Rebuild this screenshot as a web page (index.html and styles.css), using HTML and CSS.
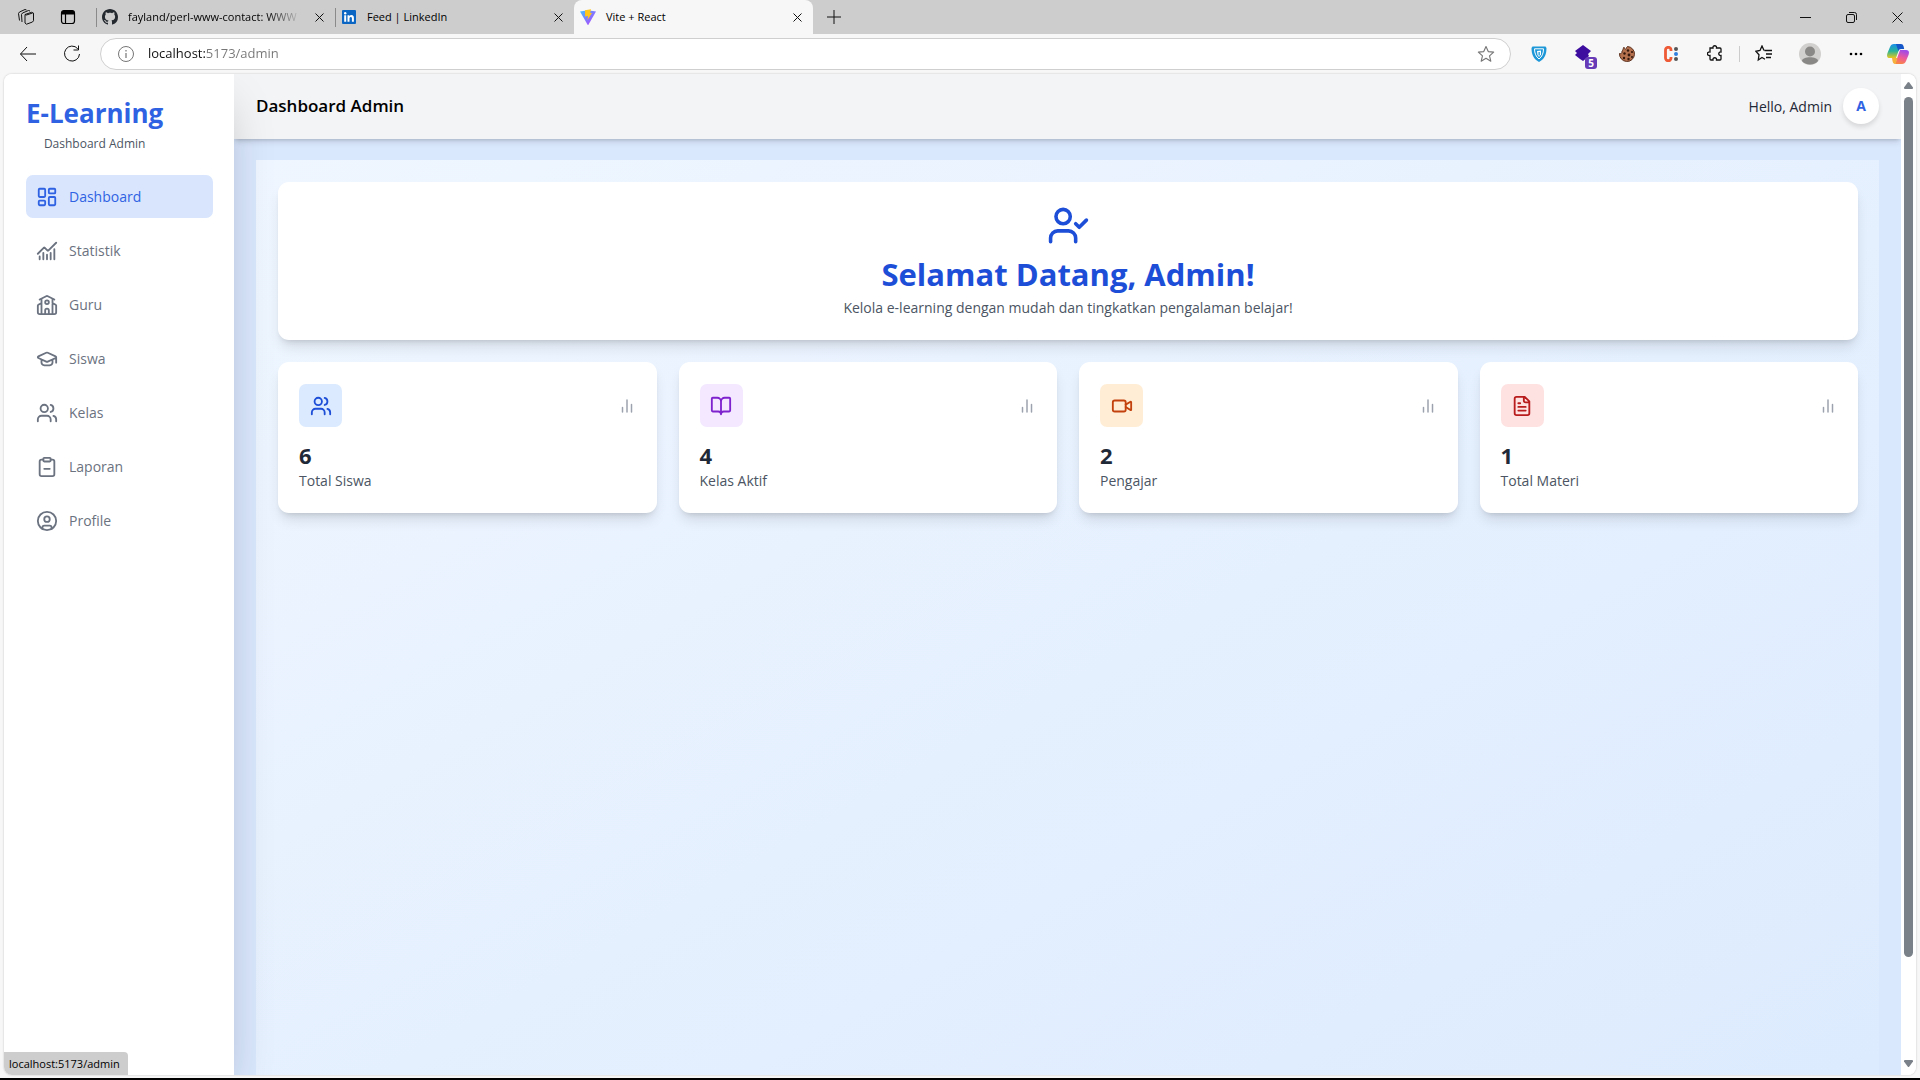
FILE: index.html
```html
<!DOCTYPE html>
<html lang="id">
<head>
<meta charset="utf-8">
<title>Vite + React</title>
<link rel="stylesheet" href="styles.css">
</head>
<body>
<div class="window">
  <div class="tabstrip">
    <div class="strip-tools">
      <button class="tool" aria-label="Workspaces"><svg width="18" height="18" viewBox="0 0 18 18" class="thin"><path d="M8 6.5l6.5-2.2 2 .8v7.6l-1 1.3-6 2.2L8 15zM5 14l-.5-7.500 1-1.500 6-2.500 1.500.5M2.500 12.500L1.500 5.500l1-1.500 5.500-2.500 1.500.5M8 6.500l1.500.5 6-2"/></svg></button>
      <button class="tool" aria-label="Tab actions"><svg width="16" height="16" viewBox="0 0 16 16"><rect x="1.500" y="1.500" width="13" height="13" rx="2.500" fill="none" stroke="#000" stroke-width="1.200"/><path d="M1.500 5.500V4a2.500 2.500 0 0 1 2.500-2.500h8A2.500 2.500 0 0 1 14.500 4v1.500z"/><path d="M5.500 5v9.500" stroke="#000" stroke-width="1.200"/></svg></button>
    </div>
    <div class="tab">
      <svg class="favicon" viewBox="0 0 16 16"><path fill="#24292f" d="M8 0C3.580 0 0 3.580 0 8c0 3.540 2.290 6.530 5.470 7.590.4.070.55-.17.55-.38 0-.19-.01-.82-.01-1.490-2.010.37-2.530-.49-2.690-.94-.09-.23-.48-.94-.82-1.130-.28-.15-.68-.52-.01-.53.63-.01 1.080.58 1.230.82.72 1.210 1.870.87 2.330.66.07-.52.28-.87.51-1.070-1.780-.2-3.640-.89-3.640-3.950 0-.87.31-1.590.82-2.150-.08-.2-.36-1.020.08-2.120 0 0 .67-.21 2.200.82.64-.18 1.320-.27 2-.27s1.360.09 2 .27c1.530-1.040 2.200-.82 2.200-.82.44 1.100.16 1.920.08 2.120.51.56.82 1.270.82 2.150 0 3.070-1.870 3.750-3.650 3.950.29.25.54.73.54 1.480 0 1.070-.01 1.930-.01 2.200 0 .21.15.46.55.38A8.010 8.010 0 0 0 16 8c0-4.420-3.580-8-8-8z"/></svg>
      <span class="tab-title tab-title-long">fayland/perl-www-contact: WWW</span>
      <button class="close" aria-label="Close tab"><svg width="9" height="9" viewBox="0 0 9 9" class="thin"><path d="M.5.500l8 8M8.500.500l-8 8"/></svg></button>
    </div>
    <div class="tab">
      <svg class="favicon" viewBox="0 0 16 16"><rect x="1" y="1" width="14" height="14" rx="1" fill="#0a66c2"/><path fill="#fff" d="M3.200 6.300h2v6.500h-2zM6.500 6.300h1.900v.9c.4-.7 1.100-1.100 2-1.100 2 0 2.500 1.300 2.500 3.100v3.600h-2V9.600c0-.9-.1-1.700-1.100-1.700s-1.300.8-1.300 1.700v3.200h-2z"/><circle cx="4.200" cy="4.200" r="1.200" fill="#fff"/></svg>
      <span class="tab-title">Feed | LinkedIn</span>
      <button class="close" aria-label="Close tab"><svg width="9" height="9" viewBox="0 0 9 9" class="thin"><path d="M.5.500l8 8M8.500.500l-8 8"/></svg></button>
    </div>
    <div class="tab tab-active">
      <svg class="favicon" viewBox="0 0 16 16"><defs><linearGradient id="vite" x1="0" y1="0" x2="1" y2="1"><stop offset="0" stop-color="#41c3ff"/><stop offset="1" stop-color="#bd34fe"/></linearGradient></defs><path fill="url(#vite)" d="M0 2.500L8 1.300l8 1.200-7.600 13.300q-.4.500-.8 0z"/><path fill="#ffc61c" d="M5 1.200l6-1-.8 3.800h1.800L7.500 11l.5-4-2.900.5z"/></svg>
      <span class="tab-title">Vite + React</span>
      <button class="close" aria-label="Close tab"><svg width="9" height="9" viewBox="0 0 9 9" class="thin"><path d="M.5.500l8 8M8.500.500l-8 8"/></svg></button>
    </div>
    <button class="new-tab" aria-label="New tab"><svg width="14" height="14" viewBox="0 0 14 14" class="thin"><path d="M7 0v14M0 7h14"/></svg></button>
    <div class="controls">
      <button class="control" aria-label="Minimize"><svg width="11" height="11" viewBox="0 0 11 11" class="thin"><path d="M0 5.500h11"/></svg></button>
      <button class="control" aria-label="Restore"><svg width="11" height="11" viewBox="0 0 11 11" class="thin"><rect x=".5" y="2.500" width="8" height="8" rx="1.500"/><path d="M3 .5h5.500a2 2 0 0 1 2 2V8"/></svg></button>
      <button class="control" aria-label="Close"><svg width="11" height="11" viewBox="0 0 11 11" class="thin"><path d="M.5.500l10 10M10.500.500l-10 10"/></svg></button>
    </div>
  </div>

  <div class="toolbar">
    <button class="nav-btn" aria-label="Back"><svg width="18" height="16" viewBox="0 0 18 16" class="thin"><path d="M17 8H1.500M8 1L1.500 8 8 15"/></svg></button>
    <button class="nav-btn" aria-label="Refresh"><svg width="18" height="18" viewBox="0 0 18 18" class="thin"><path d="M14.800 3.800A7.500 7.500 0 1 0 16.500 9M15.500.500v4.500h-5"/></svg></button>
    <div class="address">
      <svg width="18" height="18" viewBox="0 0 18 18" fill="none" stroke="#767676"><circle cx="9" cy="9" r="7.500"/><path d="M9 8v5M9 5v1.500" stroke-width="1.200"/></svg>
      <input class="url" type="text" aria-label="Address" value="localhost:5173/admin">
      <svg width="18" height="18" viewBox="0 0 24 24" fill="none" stroke="#767676" stroke-width="1.500" stroke-linejoin="round"><path d="M12 2l3 6.800 7.200.7-5.500 4.900 1.700 7.200L12 17.800l-6.400 3.800 1.700-7.200L1.800 9.500 9 8.800z"/></svg>
    </div>
    <div class="extensions">
      <button class="ext" aria-label="Shield"><svg width="16" height="16" viewBox="0 0 16 16"><path fill="#1d97d8" d="M1.500.500h13l1 1.500c0 6.500-2 11-7.500 14C2.500 13 .5 8.500.5 2z"/><path fill="none" stroke="#fff" d="M3.500 2.800h9c0 4.500-1.500 8-4.500 10.200C5 10.800 3.500 7.300 3.500 2.800z"/><path fill="#fff" d="M6 5l4-.5v4L8 11 6.500 9z"/><path fill="#1d97d8" d="M7.500 6h1.300v3.500H7.500z"/></svg></button>
      <button class="ext" aria-label="Layers"><svg width="20" height="20" viewBox="0 0 20 20"><path fill="#3c0d9e" d="M10 1l8 6-3 3 1 2-6 5-3-2-5-4 2-2-2-2z"/></svg><span class="badge">5</span></button>
      <button class="ext" aria-label="Cookies"><svg width="16" height="16" viewBox="0 0 16 16"><path fill="#b5704e" stroke="#5a2e1b" d="M5 1.200c0 1.500 1 2 2 2 .5-1 .5-2 1.500-2.700a7.500 7.500 0 1 1-8 7c1.500.5 3-.5 2.500-2.500C4 4.500 4 2.500 5 1.200z"/><g fill="#35180d"><circle cx="9" cy="4.500" r="1.200"/><circle cx="5.500" cy="7.500" r="1.200"/><circle cx="10" cy="9" r="1.400"/><circle cx="13" cy="6" r="1.100"/><circle cx="5" cy="12" r="1.200"/><circle cx="9.500" cy="13" r="1.200"/><circle cx="13" cy="11" r="1"/></g></svg></button>
      <button class="ext" aria-label="Coupon"><svg width="16" height="16" viewBox="0 0 16 16" fill="none"><path stroke="#ee5a35" stroke-width="2.800" d="M8 5V4a2.500 2.500 0 0 0-5.500 0v8A2.500 2.500 0 0 0 8 12v-1"/><g><circle cx="13" cy="3" r="2" fill="#555"/><circle cx="13" cy="8" r="2" fill="#2f7fe0"/><circle cx="13" cy="13" r="2" fill="#555"/></g></svg></button>
      <button class="ext" aria-label="Extensions"><svg width="16" height="17" viewBox="0 0 16 17" class="thin"><path d="M3 3h3c-.5-3 4-3 3.500 0H13q1 0 1 1v3c-3-.5-3 4 0 3.500V14q0 1-1 1H9.500c.5-3-4-3-3.500 0H4q-1 0-1-1v-3.500c-3.500.5-3.500-4 0-3.500z" stroke-width="1.300"/></svg></button>
      <span class="divider"></span>
      <button class="ext ext-wide" aria-label="Favorites"><svg width="18" height="17" viewBox="0 0 18 17" class="thin"><path stroke-width="1.300" d="M9 5.500L7 1 5 5.500l-4 .8 3 3.500-.7 5.200L7 12.500l3 1.800M9.500 5.500H17M11 9h6M11 12.500h5"/></svg></button>
      <button class="ext ext-wide" aria-label="Account"><svg width="22" height="22" viewBox="0 0 22 22"><circle cx="11" cy="11" r="11" fill="#d2d0ce"/><circle cx="11" cy="8.500" r="5" fill="#8a8886"/><path fill="#8a8886" d="M3 18c0-5 16-5 16 0-3 4.500-13 4.500-16 0z"/></svg></button>
      <button class="ext ext-wide" aria-label="Settings"><svg width="14" height="4" viewBox="0 0 14 4"><circle cx="2" cy="2" r="1.300"/><circle cx="7" cy="2" r="1.300"/><circle cx="12" cy="2" r="1.300"/></svg></button>
      <button class="ext ext-last" aria-label="Copilot"><svg width="22" height="20" viewBox="0 0 22 20"><defs><linearGradient id="cpa" x1="0" y1="0" x2="0" y2="1"><stop offset="0" stop-color="#1a8fe8"/><stop offset=".5" stop-color="#26b39b"/><stop offset="1" stop-color="#e8c81c"/></linearGradient><linearGradient id="cpb" x1="0.500" y1="0" x2="0.200" y2="1"><stop offset="0" stop-color="#a14be8"/><stop offset=".5" stop-color="#ee5a9b"/><stop offset="1" stop-color="#fb8a3c"/></linearGradient></defs><path fill="url(#cpa)" d="M7 0h7L9 14H3c-3 0-3.500-2-2.500-5L3 3c.7-2 2-3 4-3z"/><path fill="#1556c8" d="M9 0h5q2 0 2.500 2l.7 3H14q-2 0-2.700 2z"/><path fill="url(#cpb)" d="M15 20H8l5-14h6c3 0 3.500 2 2.500 5L19 17c-.7 2-2 3-4 3z"/><path fill="#f6b13c" d="M5 14h5.500L9 18.500Q8.500 20 7.500 20 6 20 5.500 17z"/></svg></button>
    </div>
  </div>

  <div class="viewport">
    <aside class="sidebar">
      <div class="brand">
        <h1 class="brand-name">E-Learning</h1>
        <p class="brand-sub">Dashboard Admin</p>
      </div>
      <nav class="menu">
        <a class="link link-active" href="#dashboard"><svg class="icon" viewBox="0 0 24 24"><rect x="3" y="3" width="7" height="9" rx="1"/><rect x="14" y="3" width="7" height="5" rx="1"/><rect x="14" y="12" width="7" height="9" rx="1"/><rect x="3" y="16" width="7" height="5" rx="1"/></svg>Dashboard</a>
        <a class="link" href="#statistik"><svg class="icon" viewBox="0 0 24 24"><path d="M12 16v5M16 14v7M20 10v11M22 3l-8.646 8.646a.5.5 0 0 1-.708 0L9.354 8.354a.5.5 0 0 0-.707 0L2 15M4 18v3M8 14v7"/></svg>Statistik</a>
        <a class="link" href="#guru"><svg class="icon" viewBox="0 0 24 24"><path d="M14 22v-4a2 2 0 1 0-4 0v4M18 10l3.447 1.724a1 1 0 0 1 .553.894V20a2 2 0 0 1-2 2H4a2 2 0 0 1-2-2v-7.382a1 1 0 0 1 .553-.894L6 10M18 5v17M4 6l7.106-3.553a2 2 0 0 1 1.788 0L20 6M6 5v17"/><circle cx="12" cy="9" r="2"/></svg>Guru</a>
        <a class="link" href="#siswa"><svg class="icon" viewBox="0 0 24 24"><path d="M21.420 10.922a1 1 0 0 0-.019-1.838L12.830 5.180a2 2 0 0 0-1.660 0L2.600 9.080a1 1 0 0 0 0 1.832l8.570 3.908a2 2 0 0 0 1.660 0zM22 10v6M6 12.500V16a6 3 0 0 0 12 0v-3.500"/></svg>Siswa</a>
        <a class="link" href="#kelas"><svg class="icon" viewBox="0 0 24 24"><path d="M16 21v-2a4 4 0 0 0-4-4H6a4 4 0 0 0-4 4v2M22 21v-2a4 4 0 0 0-3-3.870M16 3.130a4 4 0 0 1 0 7.750"/><circle cx="9" cy="7" r="4"/></svg>Kelas</a>
        <a class="link" href="#laporan"><svg class="icon" viewBox="0 0 24 24"><rect x="8" y="2" width="8" height="4" rx="1"/><path d="M16 4h2a2 2 0 0 1 2 2v14a2 2 0 0 1-2 2H6a2 2 0 0 1-2-2V6a2 2 0 0 1 2-2h2M9 14h6"/></svg>Laporan</a>
        <a class="link" href="#profile"><svg class="icon" viewBox="0 0 24 24"><circle cx="12" cy="12" r="10"/><circle cx="12" cy="10" r="3"/><path d="M7 20.662V19a2 2 0 0 1 2-2h6a2 2 0 0 1 2 2v1.662"/></svg>Profile</a>
      </nav>
    </aside>

    <div class="page">
      <header class="topbar">
        <h2 class="topbar-title">Dashboard Admin</h2>
        <div class="user"><span>Hello, Admin</span><span class="avatar">A</span></div>
      </header>
      <main class="main">
        <div class="panel">
          <section class="welcome">
            <svg class="icon icon-hero" viewBox="0 0 24 24"><path d="M16 11l2 2 4-4M16 21v-2a4 4 0 0 0-4-4H6a4 4 0 0 0-4 4v2"/><circle cx="9" cy="7" r="4"/></svg>
            <h2 class="welcome-title">Selamat Datang, Admin!</h2>
            <p class="welcome-text">Kelola e-learning dengan mudah dan tingkatkan pengalaman belajar!</p>
          </section>
          <section class="stats">
            <article class="card">
              <div class="card-head"><span class="chip chip-blue"><svg class="icon" viewBox="0 0 24 24"><path d="M16 21v-2a4 4 0 0 0-4-4H6a4 4 0 0 0-4 4v2M22 21v-2a4 4 0 0 0-3-3.870M16 3.130a4 4 0 0 1 0 7.750"/><circle cx="9" cy="7" r="4"/></svg></span><svg class="icon icon-bars" viewBox="0 0 24 24"><path d="M18 20V10M12 20V4M6 20v-6"/></svg></div>
              <h3 class="card-value">6</h3><p class="card-label">Total Siswa</p>
            </article>
            <article class="card">
              <div class="card-head"><span class="chip chip-purple"><svg class="icon" viewBox="0 0 24 24"><path d="M12 7v14M3 18a1 1 0 0 1-1-1V4a1 1 0 0 1 1-1h5a4 4 0 0 1 4 4 4 4 0 0 1 4-4h5a1 1 0 0 1 1 1v13a1 1 0 0 1-1 1h-6a3 3 0 0 0-3 3 3 3 0 0 0-3-3z"/></svg></span><svg class="icon icon-bars" viewBox="0 0 24 24"><path d="M18 20V10M12 20V4M6 20v-6"/></svg></div>
              <h3 class="card-value">4</h3><p class="card-label">Kelas Aktif</p>
            </article>
            <article class="card">
              <div class="card-head"><span class="chip chip-orange"><svg class="icon" viewBox="0 0 24 24"><path d="M16 13l5.223 3.482a.5.5 0 0 0 .777-.416V7.870a.5.5 0 0 0-.752-.432L16 10.500"/><rect x="2" y="6" width="14" height="12" rx="2"/></svg></span><svg class="icon icon-bars" viewBox="0 0 24 24"><path d="M18 20V10M12 20V4M6 20v-6"/></svg></div>
              <h3 class="card-value">2</h3><p class="card-label">Pengajar</p>
            </article>
            <article class="card">
              <div class="card-head"><span class="chip chip-red"><svg class="icon" viewBox="0 0 24 24"><path d="M15 2H6a2 2 0 0 0-2 2v16a2 2 0 0 0 2 2h12a2 2 0 0 0 2-2V7zM14 2v4a2 2 0 0 0 2 2h4M10 9H8M16 13H8M16 17H8"/></svg></span><svg class="icon icon-bars" viewBox="0 0 24 24"><path d="M18 20V10M12 20V4M6 20v-6"/></svg></div>
              <h3 class="card-value">1</h3><p class="card-label">Total Materi</p>
            </article>
          </section>
        </div>
      </main>
    </div>

    <div class="scrollbar">
      <svg width="9" height="7" viewBox="0 0 9 7" fill="#7b8189"><path d="M3.700.600q.8-1 1.600 0L9 5.500Q9.200 7 8 7H1Q-.2 7 0 5.500z"/></svg>
      <div class="track"><div class="thumb"></div></div>
      <svg width="9" height="7" viewBox="0 0 9 7" fill="#7b8189"><path d="M3.700 6.400q.8 1 1.600 0L9 1.500Q9.200 0 8 0H1Q-.2 0 0 1.500z"/></svg>
    </div>
    <div class="status">localhost:5173/admin</div>
  </div>
</div>
</body>
</html>
```
FILE: styles.css
```css
* { box-sizing: border-box; }
body {
  margin: 0;
  font-family: "Open Sans", "Noto Sans", sans-serif;
  font-size: 14px;
  line-height: 21px;
  color: #000;
}
h1, h2, h3, p { margin: 0; }
button { border: 0; padding: 0; background: none; font: inherit; color: inherit; }
svg { display: block; flex: none; }
.thin { fill: none; stroke: #111; stroke-width: 1; }

.window {
  display: flex;
  flex-direction: column;
  height: 100vh;
  background: #f7f7f7;
  border-bottom: 2px solid #000;
}

/* Tab strip */
.tabstrip {
  display: flex;
  flex: none;
  height: 34px;
  background: #cdcdcd;
  font-size: 11px;
}
.strip-tools { display: flex; width: 96px; padding-left: 5px; }
.tool { display: grid; place-items: center; width: 42px; }
.tab {
  display: flex;
  align-items: center;
  gap: 10px;
  width: 239px;
  padding: 0 8px 6px 6px;
  margin-top: 6px;
  background: linear-gradient(#8a8a8a, #8a8a8a) 0 2px / 1px 19px no-repeat;
}
.favicon { width: 16px; height: 16px; }
.tab-title {
  flex: 1;
  white-space: nowrap;
  line-height: 20px;
}
.tab-title-long { mask-image: linear-gradient(90deg, #000 80%, transparent); }
.close { display: grid; place-items: center; width: 16px; height: 16px; }
.tab-active {
  margin-top: 0;
  padding-top: 0;
  padding-bottom: 0;
  background: #f7f7f7;
  border-radius: 8px 8px 0 0;
}
.new-tab { display: grid; place-items: center; width: 42px; }
.controls { display: flex; margin-left: auto; }
.control { display: grid; place-items: center; width: 46px; }

/* Toolbar */
.toolbar { display: flex; flex: none; align-items: center; height: 39px; padding: 0 3px 0 6px; }
.nav-btn { display: grid; place-items: center; width: 44px; height: 36px; }
.address {
  display: flex;
  flex: 1;
  align-items: center;
  gap: 13px;
  height: 32px;
  margin: 0 6px;
  padding: 0 15px 0 16px;
  border: 1px solid #cfcfcf;
  border-radius: 16px;
  background: #fff;
}
.url {
  flex: 1;
  min-width: 0;
  border: 0;
  padding: 0;
  outline: 0;
  font: inherit;
  font-size: 13px;
  color: transparent;
  background: linear-gradient(90deg, #111 58px, #767676 58px);
  background-clip: text;
}
.extensions { display: flex; align-items: center; }
.ext { position: relative; display: grid; place-items: center; width: 44px; height: 32px; }
.ext-wide { width: 46px; }
.ext-last { width: 38px; }
.badge {
  position: absolute;
  right: 8px;
  bottom: 1px;
  width: 12px;
  height: 12px;
  border-radius: 3px;
  background: #673ab7;
  color: #fff;
  font-size: 10px;
  font-weight: 700;
  line-height: 12px;
  text-align: center;
}
.divider { width: 1px; height: 16px; margin: 0 1px 0 2px; background: #ccc; }

/* Page viewport */
.viewport {
  position: relative;
  display: flex;
  flex: 1;
  min-height: 0;
  margin: 1px 4px 3px;
  overflow: hidden;
  border-radius: 8px;
  background: #fff;
  box-shadow: 0 0 2px #bbb;
}

.sidebar {
  position: relative;
  z-index: 1;
  flex: none;
  width: 230px;
  padding: 22px 21px 22px 22px;
  background: #fff;
  box-shadow: 0 22px 45px -11px rgb(0 0 0 / 25%);
}
.brand { width: max-content; text-align: center; }
.brand-name { font-size: 26px; font-weight: 700; line-height: 34px; color: #2f62e3; }
.brand-sub { margin-top: 3px; font-size: 12px; line-height: 22px; color: #4b5563; }
.menu { display: grid; gap: 11px; margin-top: 20px; }
.link {
  display: flex;
  align-items: center;
  gap: 11px;
  height: 43px;
  padding: 0 10px;
  border-radius: 7px;
  color: #6b7280;
  text-decoration: none;
}
.link-active { background: #d8e5fd; color: #2f62e3; }
.icon {
  width: 22px;
  height: 22px;
  fill: none;
  stroke: currentColor;
  stroke-width: 2;
  stroke-linecap: round;
  stroke-linejoin: round;
}

.page { display: flex; flex: 1; flex-direction: column; min-width: 0; background: #dae8fe; }
.topbar {
  display: flex;
  flex: none;
  align-items: center;
  justify-content: space-between;
  padding: 14px 22px 15px;
  background: #f3f4f6;
  box-shadow: 0 4px 6px -1px rgb(0 0 0 / 12%), 0 2px 4px -2px rgb(0 0 0 / 20%);
}
.topbar-title { font-size: 17px; font-weight: 600; line-height: 28px; }
.user { display: flex; align-items: center; gap: 11px; color: #1f2937; }
.avatar {
  width: 36px;
  height: 36px;
  border-radius: 50%;
  background: #fff;
  color: #2f62e3;
  font-weight: 700;
  line-height: 36px;
  text-align: center;
  box-shadow: 0 3px 5px rgb(0 0 0 / 12%);
}

.main { display: flex; flex: 1; min-height: 0; padding: 21px 22px 0; }
.panel {
  flex: 1;
  padding: 22px 21px 22px 22px;
  background: linear-gradient(to bottom right, #eff6ff, #dbeafe 108%);
}
.welcome, .card {
  padding: 22px 21px;
  border-radius: 11px;
  background: #fff;
  box-shadow: 0 9px 14px -3px rgb(0 0 0 / 12%), 0 4px 6px -4px rgb(0 0 0 / 16%);
}
.welcome { text-align: center; }
.icon-hero { width: 43px; height: 43px; margin: 0 auto 7px; color: #1d4ed8; }
.welcome-title { font-size: 31px; font-weight: 700; line-height: 40px; color: #1d4ed8; }
.welcome-text { margin-top: 3px; color: #4b5563; }
.stats { display: grid; grid-template-columns: repeat(4, 1fr); gap: 22px; margin-top: 22px; }
.card-head { display: flex; align-items: center; justify-content: space-between; }
.chip { display: grid; place-items: center; width: 43px; height: 43px; border-radius: 7px; }
.chip-blue { background: #dbeafe; color: #1d4ed8; }
.chip-purple { background: #f3e8ff; color: #7e22ce; }
.chip-orange { background: #ffedd5; color: #c2410c; }
.chip-red { background: #fee2e2; color: #b91c1c; }
.icon-bars { width: 18px; height: 18px; color: #9ca3af; }
.card-value { margin-top: 14px; font-size: 22px; font-weight: 700; line-height: 29px; color: #1f2937; }
.card-label { color: #4b5563; }

.scrollbar {
  display: flex;
  flex: none;
  flex-direction: column;
  align-items: center;
  gap: 8px;
  width: 15px;
  padding: 8px 0;
  background: #fff;
}
.track { flex: 1; }
.thumb { width: 9px; height: 90%; border-radius: 5px; background: #7b8189; }

.status {
  position: absolute;
  z-index: 2;
  left: 0;
  bottom: 0;
  padding: 0 8px 0 5px;
  border-top-right-radius: 4px;
  background: #cdcdcd;
  font-size: 11px;
  line-height: 23px;
}
```
